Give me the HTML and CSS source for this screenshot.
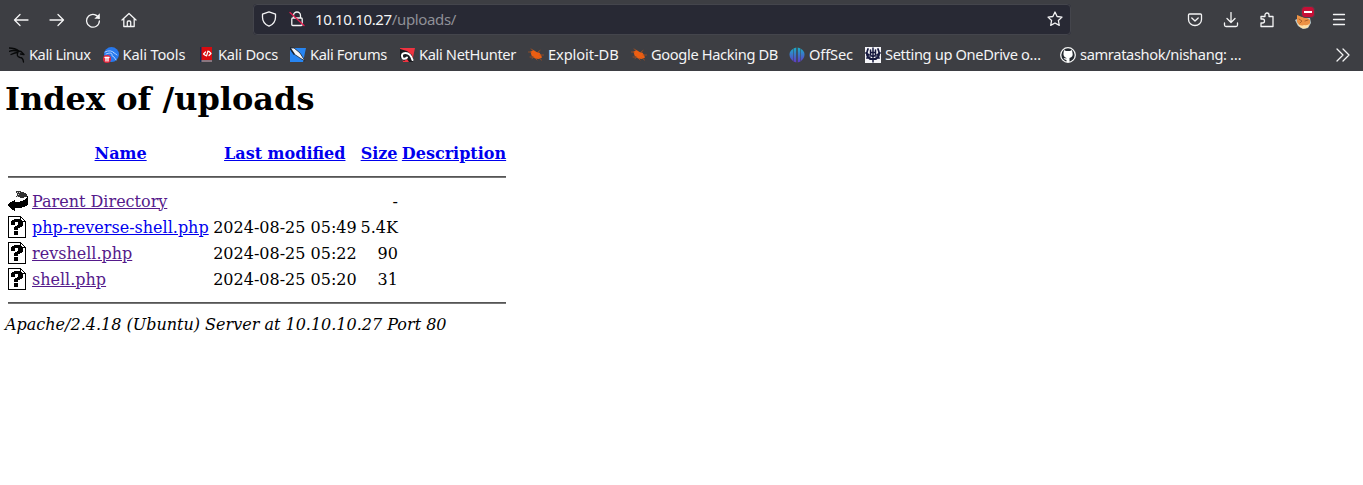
FILE: index.html
```html
<!DOCTYPE html>
<html lang="en">
<head>
<meta charset="utf-8">
<title>Index of /uploads</title>
<link rel="stylesheet" href="styles.css">
</head>
<body>
<svg class="defs" width="0" height="0">
  <symbol id="unknown" viewBox="0 0 20 22">
    <path d="M0 0h13v1h1v1h1v1h1v1h1v1h1v17H0z" fill="#000"/>
    <path d="M1 1h11v5h5v15H1z" fill="#fff"/>
    <path d="M13 2h1v1h1v1h1v1h-3z" fill="#fff"/>
    <path d="M3 5h1V4h2V3h6v1h2v1h1v5h-1v1h-2v1h-2v2H6v-3h1v-1h2V9h1V6H7v3H3zM6 15h4v4H6z" fill="#000"/>
  </symbol>
  <symbol id="bug" viewBox="0 0 16 16">
    <path d="M2.500 4.500l3-1.500 3 2 3 .7 1.500 2.300 1 2.500-3 1.500-4-.5-3.500-3z" fill="#ec5e12"/>
    <path d="M.5 5h3M2 10h4l-2 1.500M5 3l-2-1M10 5l2-1.500M12 8h3.500M11 11l2.500 2M7 11l2 2" stroke="#a9501f" stroke-width=".8" fill="none"/>
  </symbol>
</svg>
<header class="browser">
  <nav class="toolbar">
    <div class="nav">
      <svg viewBox="0 0 16 16"><path d="M15 8H1.500M7 2.500L1.500 8 7 13.500"/></svg>
      <svg viewBox="0 0 16 16"><path d="M1 8h13.500M9 2.500L14.500 8 9 13.500"/></svg>
      <svg viewBox="0 0 16 16"><path d="M14 6.500A6.400 6.400 0 1 0 14.400 9"/><path class="solid" d="M14.800 1.200v5.500H9.300z"/></svg>
      <svg viewBox="0 0 16 16"><path d="M1 8l7-6.500L15 8M2.800 6.500v8h10.400v-8M6.300 14.500V10q0-1 1-1h1.400q1 0 1 1v4.500"/></svg>
    </div>
    <div class="address">
      <svg viewBox="0 0 16 16"><path d="M8 .8l6.500 2.400v3c0 4.500-2.600 7.300-6.500 9-3.900-1.700-6.500-4.500-6.500-9v-3z"/></svg>
      <svg class="lock" viewBox="0 0 16 16"><path d="M4.500 7V4.500a3.500 3.500 0 0 1 7 0V7M3.800 7h8.400q1 0 1 1v5.500q0 1-1 1H3.800q-1 0-1-1V8q0-1 1-1z"/><path class="slash" d="M1 1.500l14 13"/></svg>
      <span class="url"><b>10.10.10.27</b>/uploads/</span>
      <svg class="star" viewBox="0 0 16 16"><path d="M8 1l2.100 4.500 4.900.6-3.600 3.400.9 4.900L8 12l-4.300 2.400.9-4.900L1 6.100l4.900-.6z"/></svg>
    </div>
    <div class="tools">
      <svg viewBox="0 0 16 16"><path d="M2.500 2h11q1 0 1 1v4.500a6.500 6 0 0 1-13 0V3q0-1 1-1zM4.800 6L8 9l3.200-3"/></svg>
      <svg viewBox="0 0 16 16"><path d="M8 .5V10M4 6.500l4 4 4-4M1.500 11v2q0 1.500 1.500 1.500h10q1.500 0 1.500-1.500v-2"/></svg>
      <svg viewBox="0 0 16 16"><path d="M2 7V4.500h4V3a2 2 0 0 1 4 0v1.500h4v10H2V11h1.500a2 2 0 0 0 0-4z"/></svg>
      <div class="fox">
        <svg viewBox="0 0 18 18"><path d="M0 8l6-3 9 1 1 5-3 5-5 1-5-3z" fill="#b7c7ca" stroke="none"/><path d="M2 3l5 2 5 1 3 2v4l-4 3-6-1-3-4z" fill="#ed9244" stroke="none"/><path d="M1 10q4 5 8 3 4 1 6-2l-2 4q-4 3-8 0z" fill="#ffe0a6" stroke="none"/><path d="M4 7l3 2-2 2m5-2l3-1" stroke="#9b5422" stroke-width=".8"/></svg>
        <i class="blocked"></i>
      </div>
      <svg viewBox="0 0 16 16"><path d="M2.500 2.500h11M2.500 7.500h11M2.500 12.500h11"/></svg>
    </div>
  </nav>
  <nav class="bookmarks">
    <a class="w1"><svg viewBox="0 0 16 16"><path d="M0 1q6 0 10 3M0 4.500q5-2 9 0M2 7.500q4-2 7-2-2 4 2 5 3 0 3.500 4.500M9 4l3 .5 3 3-3.500-.5" fill="none" stroke="#08090a" stroke-width="1.300"/></svg>Kali Linux</a>
    <a class="w2"><svg viewBox="0 0 16 16"><circle cx="8.500" cy="7.500" r="7.500" fill="#2878ec"/><path d="M2 5q6-3 9 1M3 7q5-2 6 0-1 2 2 3l2 3M10 5l4 3" fill="none" stroke="#b5d5ff" stroke-width=".9"/><circle cx="4" cy="12" r="4" fill="#e3263c"/><path d="M2 10.500h4M3 10.500V14M5 10.500V14" stroke="#fff"/></svg>Kali Tools</a>
    <a class="w3"><svg viewBox="0 0 16 16"><path d="M2 0h12v13H2z" fill="#d80b10"/><path d="M2 0h1.500v15H2z" fill="#172b55"/><path d="M3.500 13H14v2H3.500z" fill="#8b7680"/><path d="M7.500 5l-2 2 2 1.500m3.500-4l2 2-2 2M10 4L8.500 9" fill="none" stroke="#fff" stroke-width="1.200"/></svg>Kali Docs</a>
    <a class="w4"><svg viewBox="0 0 16 16"><path d="M0 1h16l-3 14H0z" fill="#2785f2"/><path d="M0 1h4l6 5 5 8-5-3-6-4z" fill="#f5f7fa" stroke="#182536" stroke-width=".8"/><path d="M0 1l4 6" stroke="#182536" stroke-width="1.500" fill="none"/></svg>Kali Forums</a>
    <a class="w5"><svg viewBox="0 0 16 16"><path d="M1 1h15l-3 14H4z" fill="#ee3340"/><path d="M1 2l7 2 5 4 1 7h-4l-2-3-3 2-4-3z" fill="#191b20"/><path d="M3.500 11q-2-5 3-5 5 0 7 7M4 11.500q2 1 4-1" fill="none" stroke="#fff" stroke-width="2"/></svg>Kali NetHunter</a>
    <a class="w6"><svg><use href="#bug"/></svg>Exploit-DB</a>
    <a class="w7"><svg><use href="#bug"/></svg>Google Hacking DB</a>
    <a class="w8"><svg viewBox="0 0 16 16"><defs><linearGradient id="off" gradientUnits="userSpaceOnUse" x1="0" y1="0" x2="0" y2="16"><stop stop-color="#16b4ca"/><stop offset="1" stop-color="#6235c7"/></linearGradient></defs><path d="M4 2v12Q.5 11 .5 7.500T4 2zM4.500 1.500L7.300.6v14.800l-2.800-1zM8.700.6l2.800.9v13l-2.800.9zM12 2q3.500 2 3.500 5.500T12 14z" fill="url(#off)"/></svg>OffSec</a>
    <a class="w9"><svg viewBox="0 0 16 16"><path d="M0 0h16v16H0z" fill="#f4f4f8"/><path d="M8 1v14M5.500 3v5q2.500 3 5 0V3M5.500 5.500h5" fill="none" stroke="#15183e" stroke-width="1.500"/><path d="M3 2Q0 9 5 12M13 2q3 7-2 10M5 12q3 0 6 0M1 6l3 2m11-2l-3 2M2 11l3-1m9 1l-3-1" fill="none" stroke="#15183e" stroke-width="1.800"/></svg>Setting up OneDrive o…</a>
    <a class="w10"><svg viewBox="0 0 16 16"><circle cx="8" cy="8" r="7.300" fill="#24292f" stroke="#f5f5f5"/><path d="M4 3l2 1h4l2-1 .5 3q1 4-3 5v4h-3v-2q-2 0-3-2l3 .5V11q-3.500-1-3-5z" fill="#fff"/></svg>samratashok/nishang: …</a>
    <svg class="more" viewBox="0 0 16 16"><path d="M2 2l6 6-6 6M8 2l6 6-6 6"/></svg>
  </nav>
</header>
<main class="listing">
  <h1>Index of /uploads</h1>
  <table>
    <tr class="head"><th class="icon"></th><th class="name"><a>Name</a></th><th class="date"><a>Last modified</a></th><th class="size"><a>Size</a></th><th class="desc"><a>Description</a></th></tr>
    <tr><td colspan="5" class="rule first"><hr></td></tr>
    <tr><td><svg class="file" viewBox="0 0 20 22"><path d="M8 1h5v1h3v1h2v1h1v3h-3v1h-4V7H8V6h1V3H8z" fill="#333"/><path d="M9 2h1v1H9zM11 2h1v1h-1zM10 4h1v1h-1zM9 6h1v1H9z" fill="#ccc"/><path d="M0 14h1v-1h1v-1h2v-1h2v-1h1v2h5v-1h3v-1h2V9h1V8h1V6h1v9h-1v1h-2v1h-3v1H7v3H6v-1H4v-1H3v-1H2v-1H1v-1H0z" fill="#000"/></svg></td><td><a class="visited">Parent Directory</a></td><td></td><td class="num">-</td><td></td></tr>
    <tr><td><svg class="file"><use href="#unknown"/></svg></td><td><a>php-reverse-shell.php</a></td><td>2024-08-25 05:49</td><td class="num">5.4K</td><td></td></tr>
    <tr><td><svg class="file"><use href="#unknown"/></svg></td><td><a class="visited">revshell.php</a></td><td>2024-08-25 05:22</td><td class="num">90</td><td></td></tr>
    <tr><td><svg class="file"><use href="#unknown"/></svg></td><td><a class="visited">shell.php</a></td><td>2024-08-25 05:20</td><td class="num">31</td><td></td></tr>
    <tr><td colspan="5" class="rule last"><hr></td></tr>
  </table>
  <address>Apache/2.4.18 (Ubuntu) Server at 10.10.10.27 Port 80</address>
</main>
</body>
</html>
```
FILE: styles.css
```css
* { box-sizing: border-box; }
body { margin: 0; background: #fff; overflow: hidden; }
.defs { position: absolute; }
.browser { height: 71px; background: #3d3e43; color: #f4f4f5; font: 14.67px "Noto Sans", sans-serif; letter-spacing: -.36px; }
.browser svg { width: 16px; height: 16px; flex: none; fill: none; stroke: #f4f4f5; stroke-width: 1.3; stroke-linejoin: round; stroke-linecap: round; }
.browser .solid { fill: #f4f4f5; stroke: none; }
.toolbar { height: 39px; display: flex; align-items: center; padding-left: 13px; }
.nav { display: flex; gap: 20px; width: 240px; }
.address { width: 818px; height: 31px; margin-top: -1px; background: #282934; border-radius: 4px; display: flex; align-items: center; padding: 0 8px; outline: 1px solid #44454c; outline-offset: -1px; }
.lock { margin-left: 12px; }
.browser .slash { stroke: #e31b4e; }
.url { margin-left: 10px; font-size: 15px; color: #8f9097; }
.url b { font-weight: 400; color: #f4f4f5; }
.star { margin-left: auto; }
.tools { display: flex; align-items: center; gap: 20px; margin-left: 116px; }
.fox { position: relative; width: 16px; height: 16px; }
.fox svg { width: 18px; height: 18px; display: block; }
.blocked { position: absolute; left: 6px; top: -6px; width: 14px; height: 12px; background: #c60f36; border: 1px solid #4a4149; border-radius: 4px; }
.blocked::after { content: ""; display: block; height: 2px; margin: 4px 2px; background: #fff; }
.bookmarks { height: 32px; display: flex; align-items: center; padding: 0 0 1px 9px; }
.bookmarks a { display: flex; align-items: center; gap: 4px; white-space: nowrap; flex: none; padding-bottom: 2px; }
.bookmarks a svg { stroke: none; margin-top: 2px; }
.bookmarks .w1 { width: 93.5px; letter-spacing: -.45px; }
.bookmarks .w2 { width: 95.5px; letter-spacing: -.15px; }
.bookmarks .w3 { width: 92px; letter-spacing: -.25px; }
.w4 { width: 109px; }
.w5 { width: 129px; }
.bookmarks .w6 { width: 103px; letter-spacing: -.1px; }
.w7 { width: 158px; }
.bookmarks .w8 { width: 76px; letter-spacing: -.15px; }
.w9 { width: 195px; }
.w10 { width: 275px; }
.listing { padding-left: 5px; font: 16px/19px "DejaVu Serif", serif; color: #000; }
h1 { margin: 0; padding-top: 9px; font-size: 32px; line-height: 38px; }
table { margin-top: 19px; border-spacing: 2px; table-layout: fixed; width: 504px; }
th, td { padding: 1px; white-space: nowrap; }
td { height: 24px; }
.head th { height: 28px; }
.icon { width: 22px; }
.name { width: 179px; }
.date { width: 145px; }
.size { width: 39.5px; }
.desc { width: 106px; }
.listing a { color: #00e; text-decoration: underline; }
.listing a.visited { color: #551a8b; }
.num { text-align: right; }
.file { width: 20px; height: 22px; display: block; shape-rendering: crispEdges; }
hr { margin: 0; border: 0; height: 2px; background: #777; border-top: 1px solid #555; }
td.rule { height: 18px; }
td.first { padding-bottom: 3px; }
td.last { height: 20px; }
address { margin-top: 0; }
```
